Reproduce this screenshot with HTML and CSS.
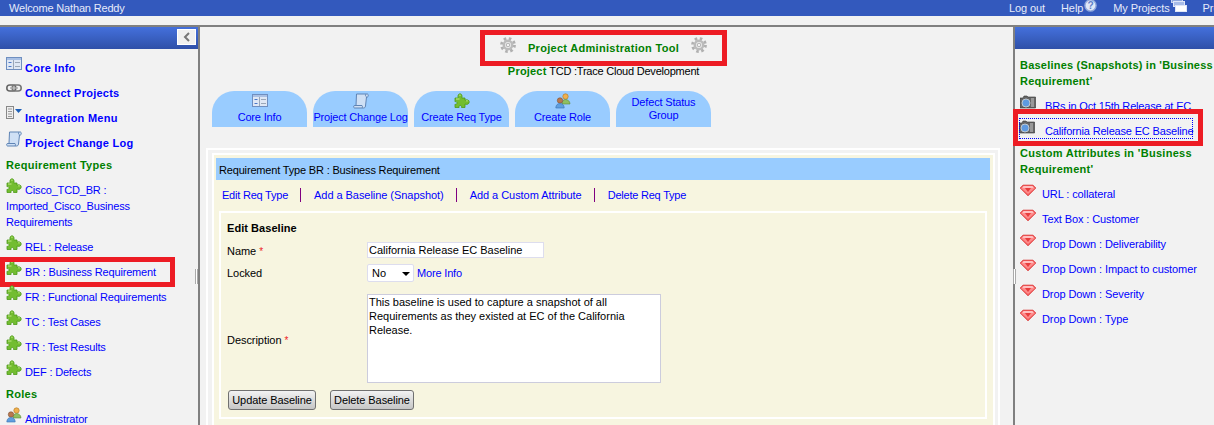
FILE: index.html
```html
<!DOCTYPE html>
<html lang="en">
<head>
	<meta charset="UTF-8">
	<title>Project Administration Tool</title>
	<link rel="stylesheet" href="styles.css">
</head>
<body>
	<!-- icon sprites -->
	<svg class="sprites" aria-hidden="true">
		<symbol id="i-core" viewBox="0 0 16 16">
			<rect x="0.5" y="1.5" width="15" height="12" fill="#dfe8f5" stroke="#6f8fc0"/>
			<rect x="1" y="2" width="14" height="2" fill="#a9c0e4"/>
			<path d="M2.5 6.5h3M2.5 10.5h3" stroke="#4a78c8" fill="none"/>
			<path d="M7.5 4v9M9 6.5h5M9 10.5h5" stroke="#9aa7b8" fill="none"/>
		</symbol>
		<symbol id="i-chain" viewBox="0 0 16 16">
			<rect x="0.8" y="4" width="9" height="6" rx="3" fill="none" stroke="#666" stroke-width="1.6"/>
			<rect x="6.2" y="4" width="9" height="6" rx="3" fill="none" stroke="#777" stroke-width="1.6"/>
			<path d="M4 7h8" stroke="#aaa" stroke-width="1.4"/>
		</symbol>
		<symbol id="i-integ" viewBox="0 0 16 16">
			<rect x="0.5" y="0.5" width="7" height="12" fill="#eee" stroke="#888"/>
			<path d="M2 3h4M2 5.5h4M2 8h4M2 10.5h4" stroke="#999" fill="none"/>
			<path d="M9 3h7l-3.5 4z" fill="#1c5fb8"/>
		</symbol>
		<symbol id="i-scroll" viewBox="0 0 16 16">
			<path d="M3.500 1H14.500c1 0 1 3 0 3H13.500L12.500 13c-.2 1.500-1 2-2 2H1.500c-1 0-1.200-2.500 0-2.500H3z" fill="#cfe0f5" stroke="#5f84b5"/>
			<path d="M1.500 12.500H9c.6 .6 .6 1.800 0 2.500M12.800 1.200c-.5 .8-.5 2 .7 2.800" fill="none" stroke="#5f84b5"/>
		</symbol>
		<symbol id="i-puzzle" viewBox="0 0 16 16">
			<path d="M1 5h3.200C3.400 2.800 4.400 .8 6 .8s2.600 2 1.800 4.200H11v2.200c2-1 4.200-.2 4.200 1.800S13 12 11 11v3.500H7.500c.4-1.200-.2-2-1.200-2s-1.600 .8-1.200 2H1v-3.300c1 .5 2 0 2-1.200S2 8.300 1 8.800z" fill="#73bd30" stroke="#4c9a18" stroke-width=".8"/>
			<path d="M5 2.500c.6-.6 1.400-.6 1.800 0M2 6h3.500M12 8c.8-.4 1.800-.2 2.200 .4" stroke="#c4ea85" fill="none"/>
		</symbol>
		<symbol id="i-people" viewBox="0 0 16 16">
			<circle cx="10.500" cy="3.500" r="2.700" fill="#f0b050" stroke="#b07820" stroke-width=".6"/>
			<path d="M7 11c0-3 1.500-4.500 3.500-4.500S15 8 15 11z" fill="#8fbf60" stroke="#608a38" stroke-width=".6"/>
			<circle cx="5" cy="7.500" r="2.700" fill="#b87850" stroke="#805030" stroke-width=".6"/>
			<path d="M.8 15c0-3 1.700-4.500 4.200-4.500S9.200 12 9.200 15z" fill="#5f9fe0" stroke="#3a70b0" stroke-width=".6"/>
		</symbol>
		<symbol id="i-camera" viewBox="0 0 16 14">
			<path d="M0 3h3l1-2h3l1 1h7.500v11H0z" fill="#666" stroke="#333" stroke-width=".6"/>
			<rect x="11" y="3" width="3" height="9" fill="#999"/>
			<circle cx="6" cy="8" r="4" fill="#5f9ae0" stroke="#c0c8d0"/>
		</symbol>
		<symbol id="i-gem" viewBox="0 0 16 12">
			<path d="M3 1h10l3 3-8 8-8-8z" fill="#f05a5a" stroke="#d84040" stroke-width=".6"/>
			<path d="M1 4h14L8 10z" fill="#ff8c8c"/>
			<path d="M5 4h6L8 8z" fill="#e83c3c"/>
			<path d="M3.500 2h9l1.500 2H2z" fill="#ffc0c0"/>
		</symbol>
		<symbol id="i-gear" viewBox="0 0 16 16">
			<circle cx="8" cy="8" r="6.400" fill="none" stroke="#b0b0b0" stroke-width="3" stroke-dasharray="2.500 2.530"/>
			<circle cx="8" cy="8" r="4.200" fill="none" stroke="#bbb" stroke-width="2.500"/>
			<circle cx="8" cy="8" r="1.800" fill="#f2f2f2" stroke="#888" stroke-width=".6"/>
		</symbol>
		<symbol id="i-stack" viewBox="0 0 16 16">
			<rect x="0.500" y="0.500" width="11" height="5" fill="#8ea6dc" stroke="#c8d4f0"/>
			<rect x="2.500" y="4.500" width="11" height="5" fill="#a8bce8" stroke="#dfe6f8"/>
			<rect x="4.500" y="8.500" width="11" height="6" fill="#fff" stroke="#dfe6f8"/>
		</symbol>
	</svg>

	<div class="topbar">
		<div class="welcome">Welcome Nathan Reddy</div>
		<div class="toplinks">
			<span class="toplink">Log out</span>
			<span class="toplink">Help<svg class="help" viewBox="0 0 14 14"><circle cx="7" cy="7" r="6" fill="#dfe8f8" stroke="#8ea6dc" stroke-width="1.500"/><text x="7" y="10.500" text-anchor="middle" class="help-q">?</text></svg></span>
			<span class="toplink">My Projects<svg class="stack"><use href="#i-stack"/></svg></span>
			<span class="toplink">Pro</span>
		</div>
	</div>

	<div class="main">
		<!-- left menu -->
		<div class="side side-left">
			<div class="side-head">
				<span class="collapse"><svg viewBox="0 0 8 10" width="8" height="10"><path d="M6 1L2 5l4 4" fill="none" stroke="#777" stroke-width="2"/></svg></span>
			</div>
			<div class="splitter"></div>
			<div class="side-body">
				<div class="row big"><svg class="ico"><use href="#i-core"/></svg><a class="gap4">Core Info</a></div>
				<div class="row big"><svg class="ico"><use href="#i-chain"/></svg><a class="gap4">Connect Projects</a></div>
				<div class="row big"><svg class="ico"><use href="#i-integ"/></svg><a class="gap4">Integration Menu</a></div>
				<div class="row big"><svg class="ico"><use href="#i-scroll"/></svg><a class="gap4">Project Change Log</a></div>
				<div class="side-title">Requirement Types</div>
				<div class="row"><svg class="ico"><use href="#i-puzzle"/></svg><a class="gap4">Cisco_TCD_BR : Imported_Cisco_Business Requirements</a></div>
				<div class="row"><svg class="ico"><use href="#i-puzzle"/></svg><a class="gap4">REL : Release</a></div>
				<div class="row marked-left"><svg class="ico"><use href="#i-puzzle"/></svg><a class="gap4">BR : Business Requirement</a></div>
				<div class="row"><svg class="ico"><use href="#i-puzzle"/></svg><a class="gap4">FR : Functional Requirements</a></div>
				<div class="row"><svg class="ico"><use href="#i-puzzle"/></svg><a class="gap4">TC : Test Cases</a></div>
				<div class="row"><svg class="ico"><use href="#i-puzzle"/></svg><a class="gap4">TR : Test Results</a></div>
				<div class="row"><svg class="ico"><use href="#i-puzzle"/></svg><a class="gap4">DEF : Defects</a></div>
				<div class="side-title">Roles</div>
				<div class="row"><svg class="ico"><use href="#i-people"/></svg><a class="gap4">Administrator</a></div>
			</div>
		</div>

		<!-- middle -->
		<div class="center">
			<div class="head">
				<div class="title-box">
					<svg class="gear"><use href="#i-gear"/></svg>
					<span class="title">Project Administration Tool</span>
					<svg class="gear"><use href="#i-gear"/></svg>
				</div>
				<div class="project"><b>Project</b> TCD :Trace Cloud Development</div>
			</div>

			<div class="tabs">
				<a class="tab"><svg class="tab-ico"><use href="#i-core"/></svg>Core Info</a>
				<a class="tab"><svg class="tab-ico"><use href="#i-scroll"/></svg>Project Change Log</a>
				<a class="tab"><svg class="tab-ico"><use href="#i-puzzle"/></svg>Create Req Type</a>
				<a class="tab"><svg class="tab-ico"><use href="#i-people"/></svg>Create Role</a>
				<a class="tab tab-text">Defect Status Group</a>
			</div>

			<div class="frame">
				<div class="panel">
					<div class="panel-head">Requirement Type BR : Business Requirement</div>
					<div class="actions">
						<a class="tight">Edit Req Type</a><i></i>
						<a>Add a Baseline (Snapshot)</a><i></i>
						<a>Add a Custom Attribute</a><i></i>
						<a class="tight">Delete Req Type</a>
					</div>
					<div class="edit">
						<div class="edit-title">Edit Baseline</div>
						<div class="form">
							<label>Name <em>*</em></label>
							<div><input class="name" type="text" value="California Release EC Baseline"></div>
							<label>Locked</label>
							<div class="locked">
								<span class="select-wrap"><select><option>No</option><option>Yes</option></select></span>
								<a>More Info</a>
							</div>
							<label class="desc-label">Description <em>*</em></label>
							<div class="desc-cell"><textarea>This baseline is used to capture a snapshot of all Requirements as they existed at EC of the California Release.</textarea></div>
						</div>
						<div class="buttons">
							<button class="btn-update" type="button">Update Baseline</button>
							<button class="btn-delete" type="button">Delete Baseline</button>
						</div>
					</div>
				</div>
			</div>
		</div>

		<!-- right menu -->
		<div class="side side-right">
			<div class="side-head"></div>
			<div class="splitter"></div>
			<div class="side-body">
				<div class="side-title snug">Baselines (Snapshots) in 'Business<br>Requirement'</div>
				<div class="row"><svg class="ico"><use href="#i-camera"/></svg><a class="gap9">BRs in Oct 15th Release at EC</a></div>
				<div class="row marked-right"><span class="focused"><svg class="ico"><use href="#i-camera"/></svg><a class="gap10">California Release EC Baseline</a></span></div>
				<div class="side-title">Custom Attributes in 'Business Requirement'</div>
				<div class="row"><svg class="ico"><use href="#i-gem"/></svg><a class="gap6">URL : collateral</a></div>
				<div class="row"><svg class="ico"><use href="#i-gem"/></svg><a class="gap6">Text Box : Customer</a></div>
				<div class="row"><svg class="ico"><use href="#i-gem"/></svg><a class="gap6">Drop Down : Deliverability</a></div>
				<div class="row"><svg class="ico"><use href="#i-gem"/></svg><a class="gap6">Drop Down : Impact to customer</a></div>
				<div class="row"><svg class="ico"><use href="#i-gem"/></svg><a class="gap6">Drop Down : Severity</a></div>
				<div class="row"><svg class="ico"><use href="#i-gem"/></svg><a class="gap6">Drop Down : Type</a></div>
			</div>
		</div>
	</div>
</body>
</html>
```

FILE: styles.css
```css
html, body {
	margin: 0;
	height: 425px;
	overflow: hidden;
}
body {
	background: #f2f2f2;
	font-family: "Liberation Sans", Arial, sans-serif;
	font-size: 11px;
	line-height: 16px;
	letter-spacing: -0.17px;
	color: #000;
}
a {
	color: #0000ff;
}
.sprites {
	display: none;
}

/* top bar */
.topbar {
	display: flex;
	width: 1214px;
	height: 16px;
	background: #3359bd;
	color: #e6ebfa;
	overflow: hidden;
}
.welcome {
	flex: none;
	box-sizing: border-box;
	width: 1009px;
	padding-left: 9px;
}
.toplinks {
	display: flex;
	flex: none;
	gap: 16px;
	letter-spacing: -0.1px;
}
.toplink {
	display: flex;
}
.help {
	width: 13px;
	height: 13px;
	margin-top: -1px;
	margin-left: 1px;
}
.help-q {
	font-size: 11px;
	font-weight: bold;
	fill: #5f7fc8;
}
.stack {
	width: 16px;
	height: 16px;
	margin-top: -3px;
	margin-left: 1px;
}

/* columns */
.main {
	display: flex;
	height: 398px;
	margin-top: 9px;
	border-top: 2px solid #808080;
}
.side {
	position: relative;
	flex: none;
	width: 198px;
}
.side-left {
	border-right: 2px solid #808080;
}
.side-right {
	width: 199px;
	border-left: 2px solid #808080;
}
.side-head {
	display: flex;
	justify-content: flex-end;
	height: 22px;
	background: linear-gradient(#4470dc, #2f50a8);
}
.collapse {
	display: flex;
	align-items: center;
	justify-content: center;
	width: 17px;
	height: 14px;
	margin: 2px 2px 0 0;
	background: #f0f0f0;
	border: 1px solid #fff;
}
.splitter {
	position: absolute;
	top: 242px;
	width: 3px;
	height: 15px;
	border-left: 1px solid #aaa;
	border-right: 1px solid #aaa;
	box-sizing: border-box;
	background: #fff;
}
.side-left .splitter {
	right: 0;
}
.side-right .splitter {
	left: -2px;
}
.side-body {
	padding: 11px 3px 0 6px;
}
.side-right .side-body {
	padding-left: 5px;
	padding-right: 0;
}
.row {
	position: relative;
	margin-bottom: 9px;
}
.big {
	font-weight: bold;
	letter-spacing: 0.25px;
}
.side-title {
	margin: -3px 0 9px;
	font-weight: bold;
	letter-spacing: 0.3px;
	color: #008000;
}
.snug {
	white-space: nowrap;
	letter-spacing: 0.22px;
}
.ico {
	width: 16px;
	height: 16px;
	margin-top: -4px;
	vertical-align: top;
}
.gap4 {
	margin-left: 3px;
}
.gap6 {
	margin-left: 6px;
	letter-spacing: -0.1px;
}
.gap9 {
	margin-left: 9px;
}
.gap10 {
	margin-left: 10px;
}
.focused {
	display: inline-block;
	margin: -5px 0 0 -1px;
	padding-top: 5px;
	outline: 1px dotted #0000ff;
	outline-offset: -1px;
}

/* red annotation boxes */
.marked-left::after,
.marked-right::after {
	content: "";
	position: absolute;
	border: 5px solid #ed1c24;
	box-sizing: border-box;
	pointer-events: none;
}
.marked-left::after {
	left: -6px;
	top: -7px;
	width: 175px;
	height: 30px;
}
.marked-right::after {
	left: -7px;
	top: -14px;
	width: 190px;
	height: 37px;
}

/* middle */
.center {
	flex: 1;
	min-width: 0;
	overflow: hidden;
}
.head {
	display: flex;
	flex-direction: column;
	align-items: center;
	padding: 3px 6px 0 0;
}
.title-box {
	display: flex;
	justify-content: center;
	box-sizing: border-box;
	width: 247px;
	height: 36px;
	gap: 12px;
	border: 5px solid #ed1c24;
}
.gear {
	width: 16px;
	height: 16px;
	margin-top: 2px;
}
.title {
	margin-top: 5px;
	font-weight: bold;
	letter-spacing: 0.3px;
	color: #008000;
}
.project {
	margin-top: -2px;
	line-height: 14px;
	letter-spacing: -0.22px;
}
.project b {
	letter-spacing: 0.2px;
	color: #008000;
}
.tabs {
	display: flex;
	gap: 6px;
	margin: 13px 0 0 12px;
}
.tab {
	display: flex;
	flex-direction: column;
	align-items: center;
	width: 95px;
	height: 36px;
	background: #99ccff;
	border-radius: 22px 22px 0 0;
	line-height: 14px;
	text-align: center;
	white-space: nowrap;
}
.tab-ico {
	width: 16px;
	height: 16px;
	margin: 2px 0 1px;
}
.tab-text {
	box-sizing: border-box;
	padding: 5px 14px 0;
	line-height: 13px;
	white-space: normal;
}
.frame {
	width: 794px;
	margin: 21px 0 0 6px;
	box-sizing: border-box;
	padding: 3px 3px 0 4px;
	border: 2px solid #fff;
}
.panel {
	padding: 3px 3px 20px 2px;
	border: 2px solid #fff;
	background: #f7f5e0;
}
.panel-head {
	height: 22px;
	padding-left: 3px;
	line-height: 24px;
	background: #99ccff;
}
.actions {
	display: flex;
	align-items: center;
	box-sizing: border-box;
	gap: 13px;
	height: 31px;
	padding: 0 0 1px 6px;
	letter-spacing: -0.05px;
}
.actions .tight {
	letter-spacing: -0.22px;
}
.actions i {
	width: 1px;
	height: 14px;
	margin-left: -1px;
	background: #800080;
}
.edit {
	margin: 0 3px;
	padding: 8px 0 7px 6px;
	border: 2px solid #fff;
}
.edit-title {
	line-height: 14px;
	font-weight: bold;
	letter-spacing: 0.05px;
}
.form {
	display: grid;
	grid-template-columns: 140px 1fr;
	row-gap: 6px;
	margin-top: 7px;
}
.form div {
	display: flex;
}
label {
	height: 16px;
	line-height: 19px;
	letter-spacing: -0.05px;
}
.desc-label {
	align-self: center;
	margin-top: 6px;
}
em {
	font-size: 10px;
	font-style: normal;
	color: #ed1c24;
}
input, select, textarea, button {
	box-sizing: border-box;
	margin: 0;
	font-family: "Liberation Sans", Arial, sans-serif;
	font-size: 11px;
	letter-spacing: 0;
	color: #000;
}
.name {
	width: 177px;
	height: 16px;
	padding: 0 1px;
	border: 1px solid #dde;
	outline: 0;
}
.locked {
	align-items: center;
	gap: 3px;
}
.select-wrap {
	position: relative;
	display: block;
	height: 18px;
}
.select-wrap::after {
	content: "";
	position: absolute;
	left: 35px;
	top: 8px;
	border: 4px solid transparent;
	border-top-color: #000;
	border-bottom: 0;
}
select {
	display: block;
	appearance: none;
	width: 47px;
	height: 18px;
	padding: 0 0 0 4px;
	border: 1px solid #dde;
	border-radius: 2px;
	background: #fff;
}
.desc-cell {
	margin-top: 6px;
}
textarea {
	display: block;
	width: 294px;
	height: 89px;
	padding: 0 1px;
	border: 1px solid #ccd;
	line-height: 14px;
	overflow: hidden;
	resize: none;
	outline: 0;
}
.buttons {
	display: flex;
	gap: 14px;
	margin: 7px 0 0 1px;
}
button {
	height: 20px;
	padding: 0;
	border: 1px solid #707070;
	border-radius: 3px;
	letter-spacing: -0.08px;
	background: linear-gradient(#f2f2f2, #c6c6c6);
}
.btn-update {
	width: 88px;
}
.btn-delete {
	width: 84px;
}
```
